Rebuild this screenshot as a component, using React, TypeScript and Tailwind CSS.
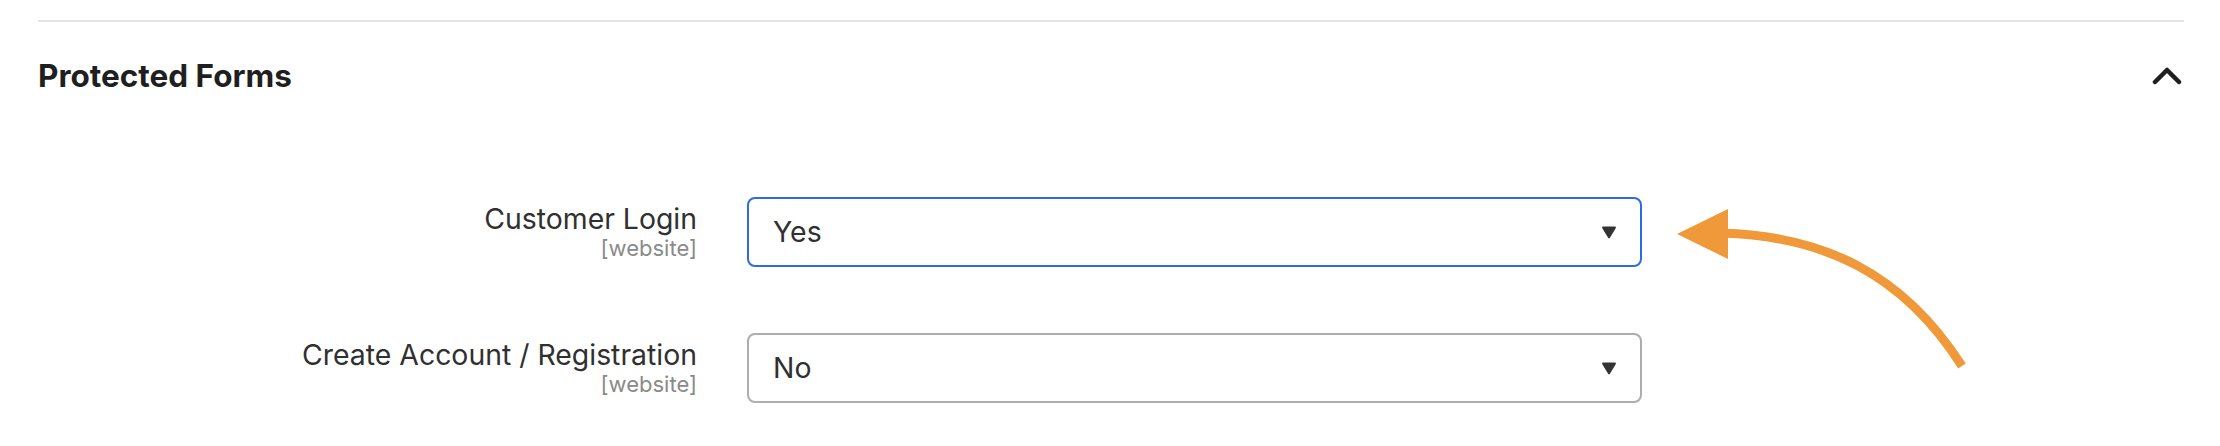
import { useState } from 'react'

const rows = [
  { label: 'Customer Login', scope: '[website]', value: 'Yes', focused: true },
  { label: 'Create Account / Registration', scope: '[website]', value: 'No', focused: false },
]

function Caret() {
  return (
    <svg className="w-[14px] h-[13px]" viewBox="0 0 14 13" fill="#333333">
      <path d="M1.2 0.5h11.6c0.9 0 1.4 1 0.9 1.7L7.9 11.8c-0.4 0.7-1.4 0.7-1.8 0L0.3 2.2C-0.2 1.5 0.3 0.5 1.2 0.5z" />
    </svg>
  )
}

export default function App() {
  const [open, setOpen] = useState(true)

  return (
    <div className="relative w-[2220px] h-[446px] bg-white font-['Inter',sans-serif] text-[#303030] overflow-hidden">
      <div className="pt-[20px] pl-[38px] pr-[36px]">
        <div className="h-[2px] bg-[#e3e3e3]" />

        <div className="mt-[36px] h-[36px] flex items-center justify-between">
          <h2 className="text-[31.5px] leading-[36px] font-bold text-[#1f1f1f]">Protected Forms</h2>
          <button onClick={() => setOpen(!open)} className="mr-[2px]">
            <svg className="w-[30px] h-[18px]" viewBox="0 0 30 18" fill="none" stroke="#1f1f1f" strokeWidth={4.5} strokeLinecap="round" strokeLinejoin="round">
              <polyline points="3,15 15,3 27,15" />
            </svg>
          </button>
        </div>

        {open && (
          <div className="mt-[103px]">
            {rows.map((row, i) => (
              <div key={row.label} className={`flex items-start ${i > 0 ? 'mt-[66px]' : ''}`}>
                <div className="w-[659px] pt-[5px] text-right">
                  <div className="text-[28.4px] leading-[34px] text-[#303030]">{row.label}</div>
                  <div className="text-[22px] leading-[24px] text-[#8a8a8a]">{row.scope}</div>
                </div>
                <div
                  className={`ml-[50px] w-[895px] h-[70px] rounded-[8px] border-2 flex items-center justify-between pl-[24px] pr-[24px] ${
                    row.focused ? 'border-[#2d6be0]' : 'border-[#adadad]'
                  }`}
                >
                  <span className="text-[28.4px] leading-[34px] text-[#303030]">{row.value}</span>
                  <Caret />
                </div>
              </div>
            ))}
          </div>
        )}
      </div>

      {/* annotation arrow */}
      <svg className="absolute left-0 top-0 w-[2220px] h-[446px] pointer-events-none" viewBox="0 0 2220 446" fill="none">
        <path d="M1722 233 C1822 236 1902 272 1962 366" stroke="#f0993a" strokeWidth={9} />
        <polygon points="1677,234 1728,209 1728,259" fill="#f0993a" />
      </svg>
    </div>
  )
}
